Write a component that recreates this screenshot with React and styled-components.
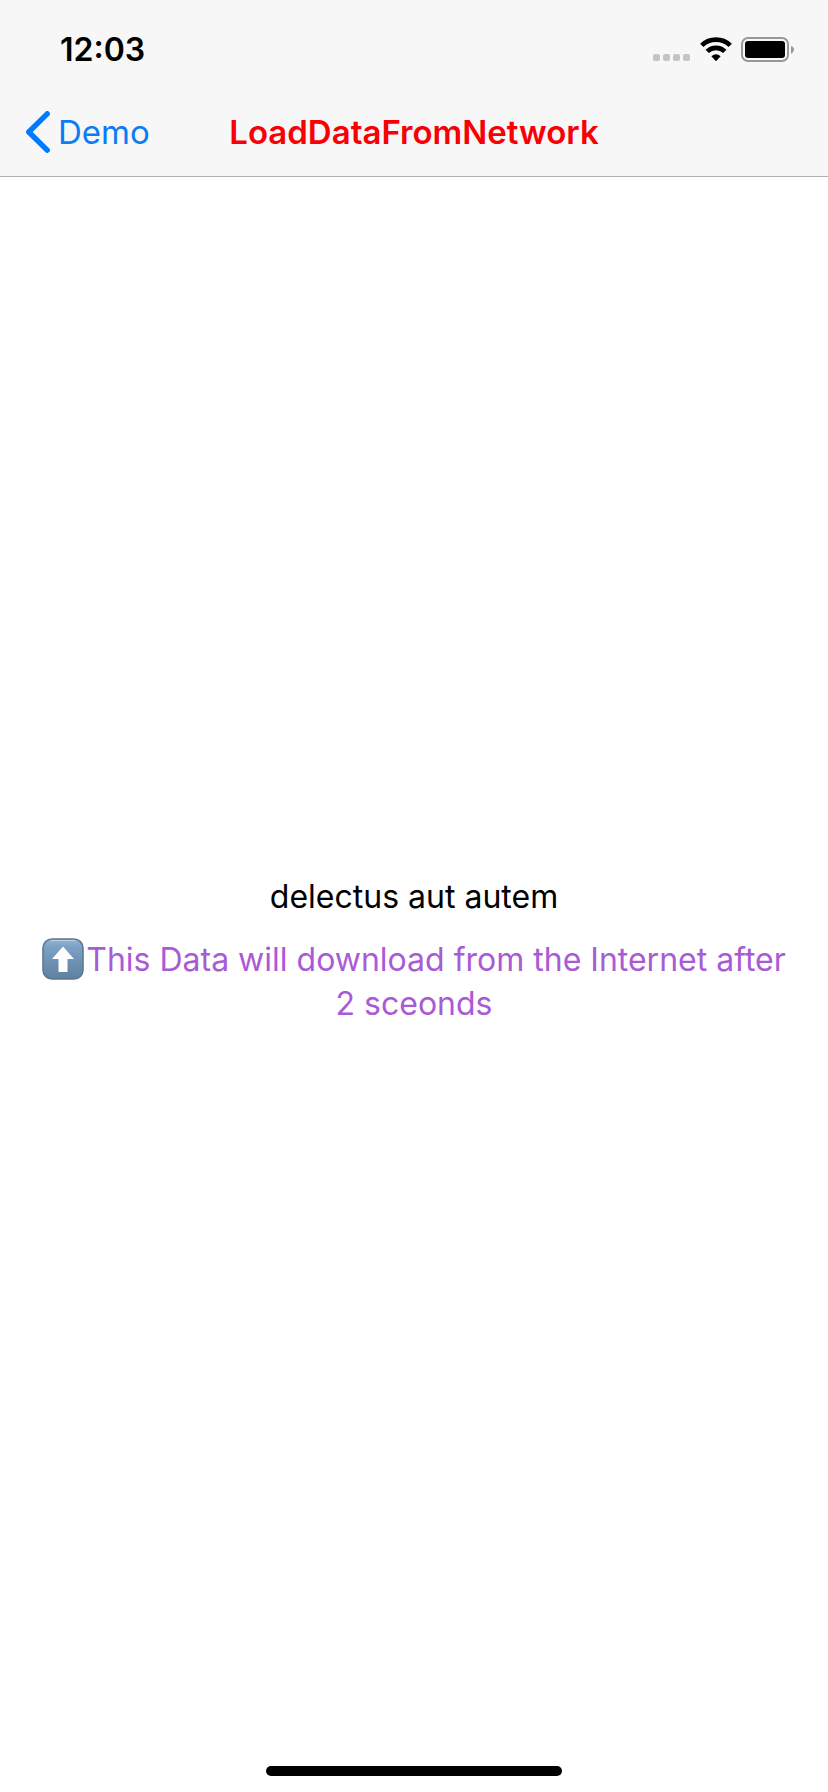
import React from "react";
import styled, { createGlobalStyle } from "styled-components";

const GlobalStyle = createGlobalStyle`
  *, *::before, *::after { box-sizing: border-box; }
  body {
    margin: 0;
    background: #fff;
    color: #000;
    font-family: Inter, "Liberation Sans", sans-serif;
    font-size: 32px;
    line-height: 44px;
  }
`;

const Screen = styled.div`
  display: flex;
  flex-direction: column;
  min-height: 100vh;
`;

const Header = styled.header`
  background: #f7f7f8;
  border-bottom: 1px solid #b0b0b2;
`;

const StatusBar = styled.div`
  display: flex;
  align-items: center;
  justify-content: space-between;
  height: 88px;
  padding: 12px 34px 0 60px;
`;

const Clock = styled.time`
  font-weight: 600;
`;

const Indicators = styled.div`
  display: flex;
  align-items: center;
  gap: 9px;
`;

const NavBar = styled.nav`
  display: grid;
  grid-template-columns: 1fr auto 1fr;
  align-items: center;
  height: 88px;
  padding: 0 25px;
  font-size: 33px;
`;

const BackLink = styled.a`
  display: flex;
  align-items: center;
  justify-self: start;
  gap: 8px;
  color: #0a7cf5;
  text-decoration: none;
`;

const Title = styled.h1`
  margin: 0;
  color: #f80004;
  font-size: inherit;
  font-weight: 600;
`;

const Content = styled.main`
  flex: 1;
  display: flex;
  flex-direction: column;
  align-items: center;
  justify-content: center;
  gap: 19px;
  padding: 0 32px;
  text-align: center;
`;

const Label = styled.p`
  margin: 0;
  color: ${({ $color }) => $color};
`;

const Emoji = styled.svg`
  width: 42px;
  height: 42px;
  margin-right: 2px;
  vertical-align: -9px;
`;

const HomeArea = styled.footer`
  display: flex;
  align-items: flex-end;
  justify-content: center;
  height: 68px;
  padding-bottom: 16px;
`;

const HomeIndicator = styled.div`
  width: 296px;
  height: 10px;
  border-radius: 5px;
  background: #000;
`;

const SignalIcon = () => (
  <svg width="38" height="26" viewBox="0 0 38 26" fill="#c4c4c6" aria-hidden="true">
    {[0, 10, 20, 30].map((x) => (
      <rect key={x} x={x} y="17" width="7" height="7" rx="2" />
    ))}
  </svg>
);

const WifiIcon = () => (
  <svg width="32" height="26" viewBox="0 0 32 26" aria-hidden="true">
    <g fill="none" stroke="#000" strokeWidth="4.8">
      <path d="M1.8 8.4A20.4 20.4 0 0 1 30.2 8.4" />
      <path d="M7.2 14.4A12.6 12.6 0 0 1 24.8 14.4" />
    </g>
    <path d="M11.4 19.2Q16 15.4 20.6 19.2L16.8 23.6Q16 24.4 15.2 23.6Z" />
  </svg>
);

const BatteryIcon = () => (
  <svg width="53" height="26" viewBox="0 0 53 26" aria-hidden="true">
    <rect x="1" y="1" width="46" height="23" rx="6" fill="none" stroke="#98989a" strokeWidth="2" />
    <rect x="4" y="4" width="40" height="17" rx="3" />
    <path d="M50 9Q53 10 53 12.5T50 17Z" fill="#98989a" />
  </svg>
);

const ChevronIcon = () => (
  <svg width="25" height="42" viewBox="0 0 25 42" aria-hidden="true">
    <path d="M22.2 2.8L3.8 21L22.2 39.2" fill="none" stroke="#007aff" strokeWidth="5.4" strokeLinecap="round" strokeLinejoin="round" />
  </svg>
);

const UpArrow = () => (
  <Emoji viewBox="0 0 42 42" role="img" aria-label="Up arrow">
    <defs>
      <linearGradient id="key" x1="0" y1="0" x2="0" y2="1">
        <stop offset="0" stopColor="#98b4cf" />
        <stop offset="0.2" stopColor="#7ba1c5" />
        <stop offset="1" stopColor="#60809f" />
      </linearGradient>
    </defs>
    <rect x="1" y="1" width="40" height="40" rx="9" fill="url(#key)" stroke="#5c7894" strokeWidth="1.6" />
    <path d="M9 2.6H33" stroke="#c2d3e3" strokeWidth="1" />
    <path d="M21 8.5L32 21H25.5V34H16.5V21H10Z" fill="#fff" />
  </Emoji>
);

export default function App() {
  return (
    <>
      <GlobalStyle />
      <Screen>
        <Header>
          <StatusBar>
            <Clock>12:03</Clock>
            <Indicators>
              <SignalIcon />
              <WifiIcon />
              <BatteryIcon />
            </Indicators>
          </StatusBar>
          <NavBar>
            <BackLink href="#demo">
              <ChevronIcon />
              Demo
            </BackLink>
            <Title>LoadDataFromNetwork</Title>
          </NavBar>
        </Header>
        <Content>
          <Label $color="#000">delectus aut autem</Label>
          <Label $color="#a95bd5">
            <UpArrow />
            This Data will download from the Internet after 2 sceonds
          </Label>
        </Content>
        <HomeArea>
          <HomeIndicator />
        </HomeArea>
      </Screen>
    </>
  );
}
